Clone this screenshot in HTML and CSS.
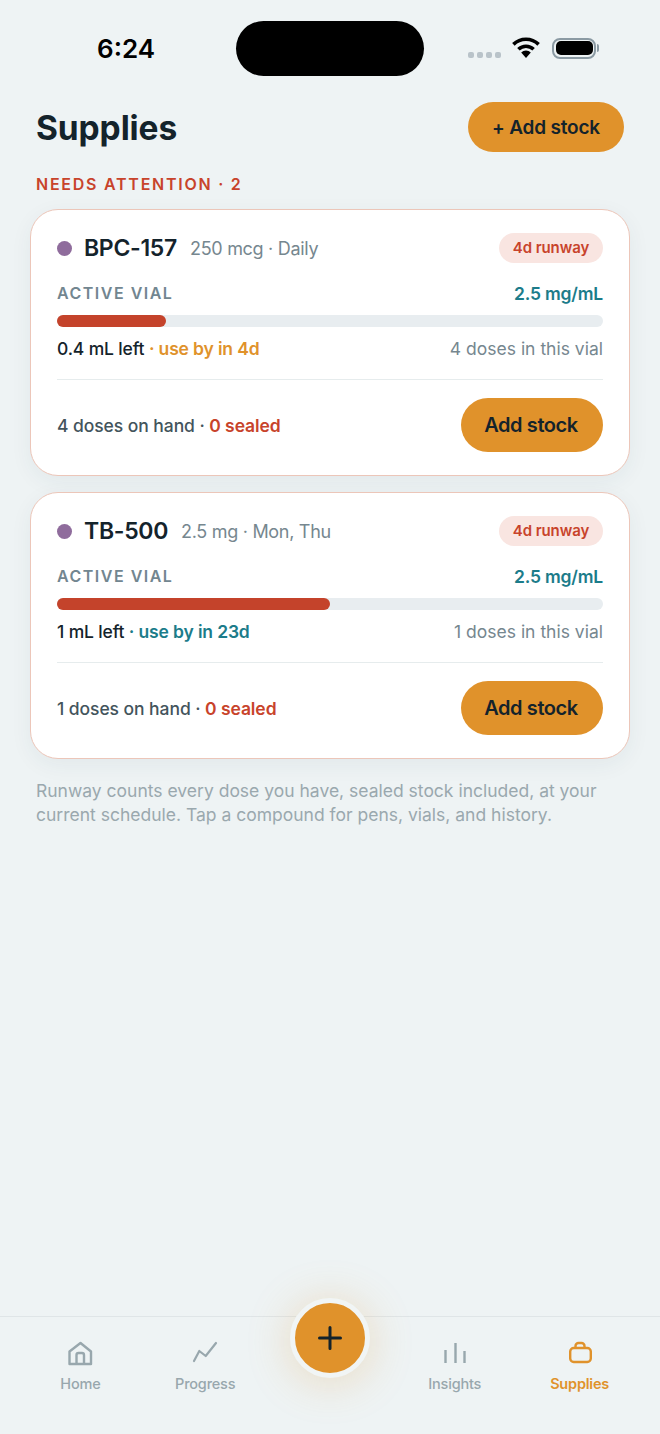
FILE: index.html
```html
<!DOCTYPE html>
<html lang="en">
<head>
    <meta charset="UTF-8">
    <meta name="viewport" content="width=device-width, initial-scale=1.0">
    <title>Supplies</title>
    <link rel="stylesheet" href="styles.css">
</head>
<body>
    <div class="phone">
        <div class="status-bar">
            <span class="clock">6:24</span>
            <div class="island"></div>
            <div class="status-icons">
                <div class="signal"><i></i><i></i><i></i><i></i></div>
                <svg class="wifi" width="30" height="22" viewBox="0 0 30 22">
                    <path d="M15 21l-4.800-5.400a6.800 6.800 0 0 1 9.600 0z" fill="#000"/>
                    <path d="M7.400 12.300a11 11 0 0 1 15.200 0" fill="none" stroke="#000" stroke-width="3.600"/>
                    <path d="M2.400 7.400a18 18 0 0 1 25.200 0" fill="none" stroke="#000" stroke-width="3.600"/>
                </svg>
                <div class="battery"><div class="battery-fill"></div></div>
                <div class="battery-cap"></div>
            </div>
        </div>

        <main class="content">
            <header class="page-head">
                <h1>Supplies</h1>
                <button class="btn btn-head">+ Add stock</button>
            </header>
            <h2 class="section-label">NEEDS ATTENTION · 2</h2>

            <section class="card">
                <div class="card-top">
                    <span class="dot"></span>
                    <span class="name">BPC-157</span>
                    <span class="dose">250 mcg · Daily</span>
                    <span class="pill">4d runway</span>
                </div>
                <div class="vial-head">
                    <span class="vial-label">ACTIVE VIAL</span>
                    <span class="conc">2.5 mg/mL</span>
                </div>
                <div class="bar"><div class="bar-fill" style="width: 20%"></div></div>
                <div class="vial-foot">
                    <span class="left">0.4 mL left <span class="amber">· use by in 4d</span></span>
                    <span class="doses">4 doses in this vial</span>
                </div>
                <div class="card-bottom">
                    <span class="hand">4 doses on hand · <b class="red">0 sealed</b></span>
                    <button class="btn btn-card">Add stock</button>
                </div>
            </section>

            <section class="card">
                <div class="card-top">
                    <span class="dot"></span>
                    <span class="name">TB-500</span>
                    <span class="dose">2.5 mg · Mon, Thu</span>
                    <span class="pill">4d runway</span>
                </div>
                <div class="vial-head">
                    <span class="vial-label">ACTIVE VIAL</span>
                    <span class="conc">2.5 mg/mL</span>
                </div>
                <div class="bar"><div class="bar-fill" style="width: 50%"></div></div>
                <div class="vial-foot">
                    <span class="left">1 mL left <span class="teal">· use by in 23d</span></span>
                    <span class="doses">1 doses in this vial</span>
                </div>
                <div class="card-bottom">
                    <span class="hand">1 doses on hand · <b class="red">0 sealed</b></span>
                    <button class="btn btn-card">Add stock</button>
                </div>
            </section>

            <p class="note">Runway counts every dose you have, sealed stock included, at your current schedule. Tap a compound for pens, vials, and history.</p>
        </main>

        <nav class="tabbar">
            <a class="tab">
                <svg width="28" height="28" viewBox="0 0 28 28" fill="none" stroke="currentColor" stroke-width="2.400" stroke-linejoin="round">
                    <path d="M3.500 12.500L14.500 4l10.500 8.500V25H3.500z"/>
                    <path d="M10.500 25v-9a2 2 0 0 1 2-2h3.500a2 2 0 0 1 2 2v9"/>
                </svg>
                Home
            </a>
            <a class="tab">
                <svg width="28" height="28" viewBox="0 0 28 28" fill="none" stroke="currentColor" stroke-width="2.200" stroke-linecap="round" stroke-linejoin="round">
                    <path d="M3 22l5.300-10 6.400 5L25 4"/>
                </svg>
                Progress
            </a>
            <div class="tab-gap"></div>
            <a class="tab">
                <svg width="28" height="28" viewBox="0 0 28 28" fill="none" stroke="currentColor" stroke-width="2.400">
                    <path d="M4.500 11v13M14.500 4v20M23.500 12v12"/>
                </svg>
                Insights
            </a>
            <a class="tab tab-active">
                <svg width="28" height="28" viewBox="0 0 28 28" fill="none" stroke="currentColor" stroke-width="2.400">
                    <rect x="4.200" y="9" width="20.600" height="14" rx="3.500"/>
                    <path d="M9.500 9V7a3 3 0 0 1 3-3h3a3 3 0 0 1 3 3v2"/>
                </svg>
                Supplies
            </a>
            <button class="fab">
                <svg width="28" height="28" viewBox="0 0 28 28" fill="none" stroke="#14232b" stroke-width="3" stroke-linecap="round">
                    <path d="M14 3.500v21M3.500 14h21"/>
                </svg>
            </button>
        </nav>
    </div>
</body>
</html>
```

FILE: styles.css
```css
* {
    box-sizing: border-box;
}

body {
    margin: 0;
    background-color: #eef3f4;
    color: #14232b;
    font-family: Inter, "Noto Sans", sans-serif;
}

.phone {
    width: 660px;
    height: 1434px;
    display: flex;
    flex-direction: column;
    overflow: hidden;
}

/* Status bar */
.status-bar {
    height: 102px;
    padding: 21px 0 0 97px;
    display: flex;
    align-items: flex-start;
}

.clock {
    width: 139px;
    margin-top: 13px;
    font-family: Inter, sans-serif;
    font-size: 26px;
    line-height: 30px;
    font-weight: 600;
    color: #000;
}

.island {
    width: 188px;
    height: 55px;
    background-color: #000;
    border-radius: 28px;
}

.status-icons {
    margin: 17px 0 0 44px;
    height: 20px;
    display: flex;
    align-items: center;
}

.signal {
    display: flex;
    gap: 3px;
    margin-top: 14px;
}

.signal i {
    width: 6px;
    height: 6px;
    border-radius: 2px;
    background-color: #b9c3c9;
}

.wifi {
    margin-left: 10px;
}

.battery {
    width: 44px;
    height: 21px;
    margin-left: 11px;
    padding: 1.500px;
    border: 2px solid #8b9aa3;
    border-radius: 8px;
}

.battery-fill {
    height: 100%;
    background-color: #000;
    border-radius: 5px;
}

.battery-cap {
    width: 2px;
    height: 8px;
    margin-left: 1px;
    background-color: #8b9aa3;
    border-radius: 0 2px 2px 0;
}

/* Content */
.content {
    flex: 1;
    padding: 0 30px;
}

.page-head {
    height: 50px;
    padding: 0 6px;
    display: flex;
    align-items: center;
    justify-content: space-between;
}

h1 {
    margin: 2px 0 0;
    font-size: 33.500px;
    font-weight: 700;
    letter-spacing: -0.1px;
}

.btn {
    border: 0;
    background-color: #e0922b;
    color: #14232b;
    font-family: inherit;
    font-weight: 600;
    border-radius: 27px;
}

.btn-head {
    width: 156px;
    height: 50px;
    padding: 0;
    font-size: 19px;
    letter-spacing: -0.2px;
}

.section-label {
    margin: 22px 6px 15px;
    font-size: 16px;
    line-height: 20px;
    font-weight: 600;
    letter-spacing: 1.750px;
    color: #c8432b;
}

.card {
    height: 267px;
    margin-bottom: 16px;
    padding: 23px 26px 23px;
    background-color: #fff;
    border: 1px solid #ecc6b9;
    border-radius: 28px;
    box-shadow: 0 6px 22px rgba(40, 70, 80, 0.06);
}

.card-top {
    height: 30px;
    display: flex;
    align-items: center;
}

.dot {
    width: 15px;
    height: 15px;
    margin-right: 12px;
    border-radius: 50%;
    background-color: #8f6c9c;
}

.name {
    margin-right: 13px;
    font-size: 23px;
    font-weight: 600;
    letter-spacing: -0.3px;
}

.dose {
    font-size: 18px;
    letter-spacing: -0.3px;
    color: #76878f;
}

.pill {
    margin-left: auto;
    width: 104px;
    height: 30px;
    line-height: 30px;
    text-align: center;
    font-size: 15px;
    font-weight: 600;
    letter-spacing: -0.1px;
    color: #c8432b;
    background-color: #f9e5e1;
    border-radius: 15px;
}

.vial-head {
    height: 22px;
    margin-top: 19px;
    display: flex;
    align-items: center;
    justify-content: space-between;
}

.vial-label {
    font-size: 16px;
    font-weight: 600;
    letter-spacing: 1.500px;
    color: #728690;
}

.conc {
    font-size: 17.500px;
    font-weight: 600;
    letter-spacing: -0.2px;
    color: #1c7c8a;
}

.bar {
    height: 12px;
    margin-top: 11px;
    background-color: #e8edf0;
    border-radius: 6px;
}

.bar-fill {
    height: 100%;
    background-color: #c4432b;
    border-radius: 6px;
}

.vial-foot {
    height: 24px;
    margin-top: 9px;
    display: flex;
    align-items: center;
    justify-content: space-between;
}

.left {
    font-size: 17.500px;
    font-weight: 500;
    letter-spacing: -0.150px;
}

.amber {
    font-weight: 600;
    color: #e0922b;
}

.teal {
    font-weight: 600;
    color: #1c7c8a;
}

.doses {
    font-size: 17.500px;
    color: #76878f;
}

.card-bottom {
    margin-top: 19px;
    padding-top: 18px;
    border-top: 1px solid #e6eced;
    display: flex;
    align-items: center;
    justify-content: space-between;
}

.hand {
    font-size: 17.500px;
    font-weight: 500;
    letter-spacing: -0.070px;
    color: #43545c;
}

.red {
    font-weight: 600;
    color: #c8432b;
}

.btn-card {
    width: 142px;
    height: 54px;
    padding: 0 2px 0 0;
    font-size: 20px;
    letter-spacing: -0.4px;
}

.note {
    margin: 20px 6px 0;
    font-size: 17.500px;
    line-height: 24px;
    color: #9aa8ae;
}

/* Tab bar */
.tabbar {
    position: relative;
    height: 118px;
    padding: 22px 18px 0;
    border-top: 1px solid #dfe5e7;
    display: grid;
    grid-template-columns: repeat(5, 1fr);
    align-items: start;
}

.tab {
    display: flex;
    flex-direction: column;
    align-items: center;
    gap: 8px;
    font-size: 14.500px;
    line-height: 18px;
    font-weight: 500;
    letter-spacing: -0.2px;
    color: #98a7ad;
}

.tab-active {
    font-weight: 600;
    color: #e0922b;
}

.fab {
    position: absolute;
    left: 290px;
    top: -19px;
    width: 80px;
    height: 80px;
    padding: 0;
    display: flex;
    align-items: center;
    justify-content: center;
    background-color: #e0922b;
    border: 5px solid #f1f5f5;
    border-radius: 50%;
    box-shadow: 0 4px 44px rgba(224, 146, 43, 0.26);
}
```
